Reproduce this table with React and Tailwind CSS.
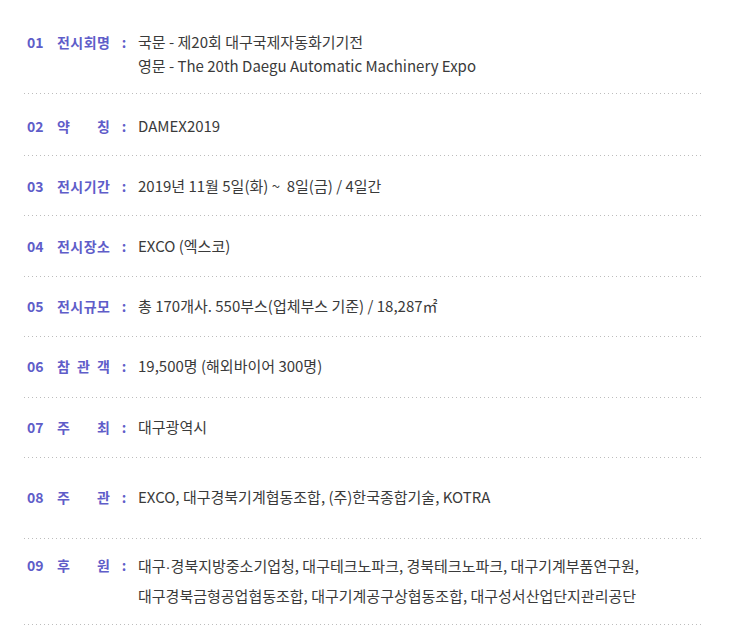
import React from 'react';

const rows = [
  {
    no: '01',
    label: ['전', '시', '회', '명'],
    lines: ['국문 - 제20회 대구국제자동화기기전', '영문 - The 20th Daegu Automatic Machinery Expo'],
    pad: 'pt-[30px] pb-[15px] leading-[24px]',
  },
  { no: '02', label: ['약', '칭'], lines: ['DAMEX2019'], pad: 'pt-[20px] pb-[17px] leading-[24px]' },
  { no: '03', label: ['전', '시', '기', '간'], lines: ['2019년 11월 5일(화) ~  8일(금) / 4일간'], pad: 'pt-[18px] pb-[17px] leading-[24px]' },
  { no: '04', label: ['전', '시', '장', '소'], lines: ['EXCO (엑스코)'], pad: 'pt-[18px] pb-[18px] leading-[24px]' },
  { no: '05', label: ['전', '시', '규', '모'], lines: ['총 170개사. 550부스(업체부스 기준) / 18,287㎡'], pad: 'pt-[17px] pb-[18px] leading-[24px]' },
  { no: '06', label: ['참', '관', '객'], lines: ['19,500명 (해외바이어 300명)'], pad: 'pt-[17px] pb-[19px] leading-[24px]' },
  { no: '07', label: ['주', '최'], lines: ['대구광역시'], pad: 'pt-[17px] pb-[18px] leading-[24px]' },
  { no: '08', label: ['주', '관'], lines: ['EXCO, 대구경북기계협동조합, (주)한국종합기술, KOTRA'], pad: 'pt-[27px] pb-[29px] leading-[24px]' },
  {
    no: '09',
    label: ['후', '원'],
    lines: [
      <>
        대구<span className="font-['Liberation_Sans',sans-serif]">·</span>경북지방중소기업청, 대구테크노파크, 경북테크노파크, 대구기계부품연구원,
      </>,
      '대구경북금형공업협동조합, 대구기계공구상협동조합, 대구성서산업단지관리공단',
    ],
    pad: 'pt-[12px] pb-[14px] leading-[29px]',
  },
];

function Dots() {
  return <div className="h-px w-full bg-[linear-gradient(to_right,#bdbdbd_1px,transparent_1px)] bg-[length:4px_1px] bg-repeat-x" />;
}

export default function App() {
  return (
    <div className="w-[750px] h-[644px] bg-white font-['Noto_Sans_CJK_KR','Noto_Sans',sans-serif]">
      <div className="ml-[24px] w-[678px]">
        {rows.map((r) => (
          <div key={r.no}>
            <div className={`flex items-start ${r.pad}`}>
              <span className="w-[33px] pl-[3px] text-[14px] font-bold text-[#5f5dc9]">{r.no}</span>
              <span className="w-[53px] flex justify-between text-[14px] font-bold text-[#5f5dc9]">
                {r.label.map((c, i) => (
                  <span key={i}>{c}</span>
                ))}
              </span>
              <span className="w-[28px] text-center text-[14px] font-bold text-[#5f5dc9]">:</span>
              <div className="text-[15px] text-[#3a3a3a] whitespace-pre">
                {r.lines.map((l, i) => (
                  <div key={i}>{l}</div>
                ))}
              </div>
            </div>
            <Dots />
          </div>
        ))}
      </div>
    </div>
  );
}
